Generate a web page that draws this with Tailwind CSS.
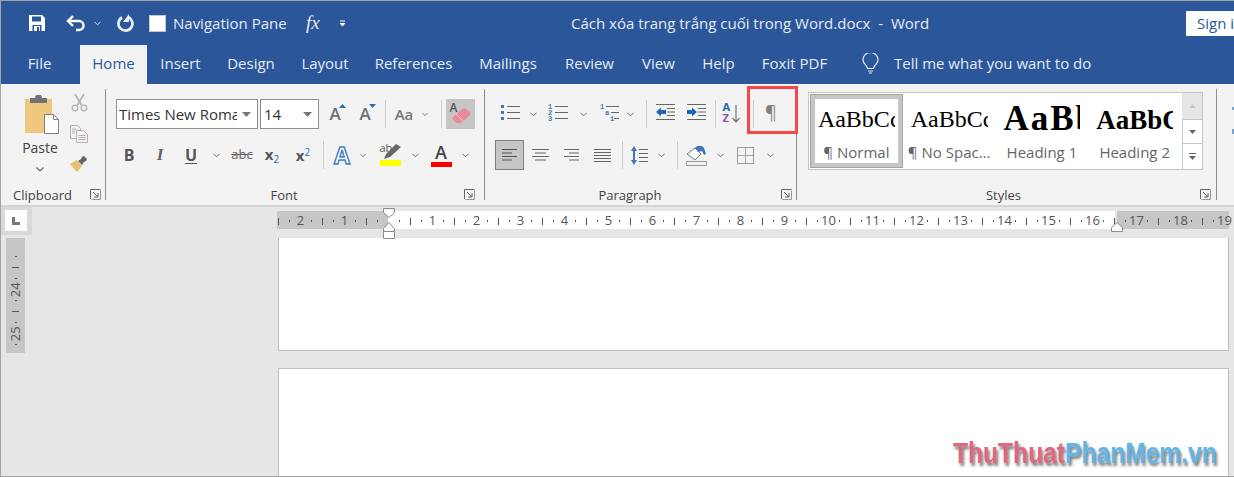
<!DOCTYPE html>
<html lang="vi">
<head>
<meta charset="UTF-8">
<title>Cách xóa trang trắng cuối trong Word.docx - Word</title>
<script src="https://cdn.jsdelivr.net/npm/@tailwindcss/browser@4"></script>
</head>
<body class="m-0 overflow-hidden bg-[#e6e6e6]">

<!-- shared small icons -->
<svg class="hidden">
  <symbol id="chev" viewBox="0 0 8 5"><path d="M.5 .5 4 4 7.500 .5" fill="none" stroke="#666" stroke-width="1.100"/></symbol>
  <symbol id="launcher" viewBox="0 0 11 11"><path d="M.5 10V.5H10.500M3 3l5 5M4 8h4V4" fill="none" stroke="#666" stroke-width="1"/><path d="M1.500 10.500h9v-9" fill="none" stroke="#999"/></symbol>
</svg>

<div class="relative w-[1234px] h-[477px] box-border overflow-hidden border-l border-t border-b border-[#a3a3a3] flex flex-col font-['Open_Sans',sans-serif]">

  <!-- title bar -->
  <div class="h-[41px] pt-[3px] shrink-0 bg-[#2b579a] flex items-center text-white text-[15px]">
    <div class="ml-[28px] w-[16px] flex justify-center">
      <svg width="16" height="16" viewBox="0 0 16 16"><path fill="#fff" d="M0 0h13l3 3v13H0z"/><path fill="#2b579a" d="M3 1.500h9v5H3zM3.500 10h9v6h-9z"/><path fill="#fff" d="M5 11h6v5H5z"/><path fill="#2b579a" d="M8 12h2v4H8z"/></svg>
    </div>
    <div class="ml-[21px] w-[20px]">
      <svg width="20" height="18" viewBox="0 0 20 18"><path d="M7 2 2 7l5 5M2 7h11a4.500 4.500 0 0 1 0 9h-3" fill="none" stroke="#fff" stroke-width="2.400"/></svg>
    </div>
    <svg class="ml-[8px] w-[7px] h-[5px]" viewBox="0 0 8 5"><path d="M.5 .5 4 4 7.500 .5" fill="none" stroke="#dfe6f1" stroke-width="1.100"/></svg>
    <div class="ml-[16px] w-[18px]">
      <svg width="18" height="18" viewBox="0 0 18 18"><path d="M5 3.500a7 7 0 1 0 6.500-.2" fill="none" stroke="#e9eef6" stroke-width="2.700"/><path d="M12 0v8H6z" fill="#e9eef6"/></svg>
    </div>
    <div class="ml-[14px] w-[17px] h-[17px] bg-white border border-[#c8c8c8]"></div>
    <span class="ml-[7px] w-[114px] whitespace-nowrap text-[#e6ebf4]">Navigation Pane</span>
    <span class="ml-[19px] w-[20px] text-[19px] italic font-['Liberation_Serif',serif] text-[#e6ebf4]">fx</span>
    <svg class="ml-[13px] w-[7px] h-[7px]" viewBox="0 0 7 7"><path d="M1 1h5" stroke="#fff" fill="none"/><path d="M.5 3h6L3.500 6.500z" fill="#fff"/></svg>
    <span class="ml-[225px] whitespace-pre text-[#e6ebf4]">Cách xóa trang trắng cuối trong Word.docx  -  Word</span>
    <div class="ml-auto w-[48px] h-[25px] bg-white text-[#2b579a] text-[15px] pl-[11px] leading-[25px] overflow-hidden whitespace-nowrap rounded-l-[1px]">Sign in</div>
  </div>

  <!-- tabs -->
  <div class="h-[42px] shrink-0 bg-[#2b579a] flex items-end text-[15px] text-[#e6ebf4]">
    <div class="w-[79px] pr-[2px] pb-[2px] h-[39px] flex items-center justify-center">File</div>
    <div class="w-[67px] pb-[2px] h-[39px] bg-[#f3f3f3] text-[#2b579a] flex items-center justify-center">Home</div>
    <div class="w-[67px] pb-[2px] h-[39px] flex items-center justify-center">Insert</div>
    <div class="w-[74px] pb-[2px] h-[39px] flex items-center justify-center">Design</div>
    <div class="w-[74px] pb-[2px] h-[39px] flex items-center justify-center">Layout</div>
    <div class="w-[103px] pb-[2px] h-[39px] flex items-center justify-center">References</div>
    <div class="w-[86px] pb-[2px] h-[39px] flex items-center justify-center">Mailings</div>
    <div class="w-[77px] pb-[2px] h-[39px] flex items-center justify-center">Review</div>
    <div class="w-[61px] pb-[2px] h-[39px] flex items-center justify-center">View</div>
    <div class="w-[59px] pb-[2px] h-[39px] flex items-center justify-center">Help</div>
    <div class="w-[93px] pb-[2px] h-[39px] flex items-center justify-center">Foxit PDF</div>
    <div class="ml-[20px] w-[18px] pb-[3px] h-[39px] flex items-center justify-center">
      <svg width="17" height="21" viewBox="0 0 17 21"><path d="M5.500 15.500c0-3-4.500-4.500-4.500-8.500a7.500 7.500 0 0 1 15 0c0 4-4.500 5.500-4.500 8.500zM6 18h5M7 20h3" fill="none" stroke="#e6ebf4" stroke-width="1.200"/></svg>
    </div>
    <div class="ml-[15px] pb-[3px] h-[39px] flex items-center">Tell me what you want to do</div>
  </div>

  <!-- ribbon -->
  <div class="h-[121px] shrink-0 bg-[#f3f3f3] flex text-[#444] text-[13px]">

    <!-- clipboard -->
    <div class="w-[104px] flex flex-col">
      <div class="flex flex-1">
        <div class="w-[68px] pl-[10px] flex flex-col items-center pt-[11px]">
          <svg class="ml-[5px]" width="35" height="39" viewBox="0 0 35 39"><path fill="#edc87e" d="M0 4h27v34H0z"/><path fill="#737373" d="M5 3h5a3.500 3.500 0 0 1 7 0h5v5H5z"/><path fill="#fff" stroke="#808080" d="M19.500 19.500h9l5 5v14h-14z"/><path fill="none" stroke="#808080" d="M28.500 19.500v5h5"/></svg>
          <span class="text-[14px] leading-[20px] mt-[4px]">Paste</span>
          <svg class="mt-[9px] w-[8px] h-[5px]"><use href="#chev"/></svg>
        </div>
        <div class="w-[20px] flex flex-col items-center pt-[10px]">
          <svg width="17" height="18" viewBox="0 0 17 18"><path d="M4 0l6.500 11M13 0 6.500 11" stroke="#b3b3b3" stroke-width="1.700" fill="none"/><circle cx="4" cy="14" r="2.800" fill="none" stroke="#b3b3b3" stroke-width="1.300"/><circle cx="13" cy="14" r="2.800" fill="none" stroke="#b3b3b3" stroke-width="1.300"/></svg>
          <svg class="mt-[13px]" width="18" height="18" viewBox="0 0 18 18"><path d="M.5.500h7l3 3v10H.5z" fill="#f3f3f3" stroke="#b9aeb9"/><path d="M6.500 5.500h7l4 4v8h-11z" fill="#f3f3f3" stroke="#b9aeb9"/><path d="M8.500 10.500h7M8.500 12.500h7M8.500 14.500h7M2 4h4M2 6h3M2 8h3" stroke="#b9aeb9"/></svg>
          <svg class="mt-[13px]" width="18" height="16" viewBox="0 0 18 16"><path fill="#e9bd72" d="M0 8l7-4 5 6-5 6z"/><path fill="#666" d="M8 5l3-2 1-2 2-1 3 3-1 2-2 1-2 3z"/></svg>
        </div>
      </div>
      <div class="h-[20px] pt-[1px] flex items-center pl-[12px] relative">Clipboard
        <svg class="absolute left-[89px] top-[4px] w-[11px] h-[11px]"><use href="#launcher"/></svg>
      </div>
    </div>
    <div class="w-px my-[5px] bg-[#8e8e8e]"></div>

    <!-- font -->
    <div class="w-[378px] flex flex-col">
      <div class="flex-1 pt-[15px] flex flex-col gap-[11px]">
        <div class="flex h-[30px] items-center pl-[10px]">
          <div class="w-[142px] h-[30px] box-border bg-white border border-[#8f8f8f] flex items-center pl-[2px] pr-[6px]">
            <span class="w-[120px] overflow-hidden whitespace-nowrap text-[15px] text-[#333]">Times New Roman</span>
            <svg class="ml-[5px]" width="9" height="5" viewBox="0 0 9 5"><path d="M0 0h9L4.500 5z" fill="#777"/></svg>
          </div>
          <div class="ml-[2px] w-[59px] h-[30px] box-border bg-white border border-[#8f8f8f] flex items-center justify-between pl-[3px] pr-[6px] text-[15px] text-[#333]">14
            <svg width="9" height="5" viewBox="0 0 9 5"><path d="M0 0h9L4.500 5z" fill="#777"/></svg>
          </div>
          <div class="ml-[1px] w-[30px] flex justify-center relative text-[17px] font-semibold text-[#707070]">A
            <svg class="absolute right-[4px] top-[3px]" width="7" height="4" viewBox="0 0 7 4"><path d="M0 4 3.500 0 7 4z" fill="#2b6cb0"/></svg>
          </div>
          <div class="w-[30px] flex justify-center relative text-[17px] font-semibold text-[#707070]">A
            <svg class="absolute right-[4px] top-[3px]" width="7" height="4" viewBox="0 0 7 4"><path d="M0 0 3.500 4 7 0z" fill="#2b6cb0"/></svg>
          </div>
          <div class="ml-[5px] w-px h-[28px] bg-[#cfcfcf]"></div>
          <div class="w-[36px] text-center text-[15px] font-semibold text-[#777]">Aa</div>
          <svg class="w-[6px] h-[5px]"><use href="#chev"/></svg>
          <div class="ml-[13px] w-px h-[28px] bg-[#cfcfcf]"></div>
          <div class="ml-[4px] w-[29px] h-[30px] bg-[#c6c6c6] flex items-center justify-center">
            <span class="relative w-[24px] h-[24px] block">
              <span class="absolute left-[1px] top-[-3px] text-[12px] font-semibold text-[#555]">A</span>
              <svg class="absolute left-[3px] top-[6px]" width="20" height="16" viewBox="0 0 20 16"><path d="M0 10 10 1q2-1.500 4 0l4 3q1 2-.5 3.500L9 15H4z" fill="#e98b99"/><path d="M4 6l7 7" stroke="#f5d0d6" stroke-width="1"/></svg>
            </span>
          </div>
        </div>
        <div class="flex h-[30px] items-center pl-[8px] text-[#555]">
          <div class="w-[30px] text-center text-[16px] font-bold">B</div>
          <div class="w-[32px] text-center text-[17px] italic font-bold font-['Liberation_Serif',serif] text-[#666]">I</div>
          <div class="w-[30px] text-center text-[16px] font-bold underline underline-offset-2">U</div>
          <div class="w-[20px] flex justify-center"><svg class="w-[7px] h-[5px]"><use href="#chev"/></svg></div>
          <div class="w-[32px] text-center text-[13px] line-through text-[#666]">abc</div>
          <div class="w-[28px] text-center text-[15px] font-bold">x<span class="text-[10px] font-normal text-[#2b6cb0] align-[-3px]">2</span></div>
          <div class="w-[34px] text-center text-[15px] font-bold">x<span class="text-[10px] font-normal text-[#2b6cb0] align-[5px]">2</span></div>
          <div class="ml-[3px] w-px h-[28px] bg-[#cfcfcf]"></div>
          <div class="w-[36px] text-center text-[23px] leading-[28px] font-bold text-white [-webkit-text-stroke:1.400px_#3f7fc4]">A</div>
          <svg class="w-[6px] h-[5px]"><use href="#chev"/></svg>
          <div class="ml-[6px] w-[36px] flex justify-center">
            <span class="relative w-[21px] h-[22px] block">
              <span class="absolute left-0 top-[-4px] text-[11px] text-[#555]">ab</span>
              <svg class="absolute left-[4px] top-[0px]" width="17" height="15" viewBox="0 0 17 15"><path d="M0 15l2-5L12 0l5 3L6 13z" fill="#666"/></svg>
              <span class="absolute left-0 bottom-0 w-[21px] h-[6px] bg-[#ffff00]"></span>
            </span>
          </div>
          <div class="w-[14px] flex justify-center"><svg class="w-[7px] h-[5px]"><use href="#chev"/></svg></div>
          <div class="w-[38px] flex justify-center">
            <span class="relative w-[21px] h-[24px] block text-center">
              <span class="block text-[18px] leading-[19px] font-semibold text-[#444]">A</span>
              <span class="absolute left-0 bottom-0 w-[21px] h-[5px] bg-[#ff0000]"></span>
            </span>
          </div>
          <div class="w-[10px] flex justify-center"><svg class="w-[7px] h-[5px]"><use href="#chev"/></svg></div>
        </div>
      </div>
      <div class="h-[20px] pt-[1px] relative flex items-center justify-center pr-[22px]">Font
        <svg class="absolute left-[358px] top-[4px] w-[11px] h-[11px]"><use href="#launcher"/></svg>
      </div>
    </div>
    <div class="w-px my-[5px] bg-[#8e8e8e]"></div>

    <!-- paragraph -->
    <div class="w-[311px] flex flex-col">
      <div class="flex-1 pt-[15px] flex flex-col gap-[11px]">
        <div class="flex h-[30px] items-center pl-[12px]">
          <div class="w-[26px] flex justify-center -mt-[4px]">
            <svg width="19" height="16" viewBox="0 0 19 16"><path d="M0 1h3v3H0zM0 7h3v3H0zM0 13h3v3H0z" fill="#3f78b5"/><path d="M6 2.500h13M6 8.500h13M6 14.500h13" stroke="#666"/></svg>
          </div>
          <div class="w-[20px] flex justify-center"><svg class="w-[7px] h-[5px]"><use href="#chev"/></svg></div>
          <div class="w-[30px] flex justify-center -mt-[4px]">
            <svg width="20" height="17" viewBox="0 0 20 17" font-size="7" font-weight="700" fill="#3f78b5" font-family="Liberation Mono, monospace"><text x="0" y="5">1</text><text x="0" y="11">2</text><text x="0" y="17">3</text><path d="M7 2.500h13M7 8.500h13M7 14.500h13" stroke="#666"/></svg>
          </div>
          <div class="w-[20px] flex justify-center"><svg class="w-[7px] h-[5px]"><use href="#chev"/></svg></div>
          <div class="w-[32px] flex justify-center -mt-[4px]">
            <svg width="19" height="17" viewBox="0 0 19 17" font-size="7" font-weight="700" fill="#3f78b5" font-family="Liberation Mono, monospace"><text x="0" y="5">1</text><text x="5" y="11">a</text><text x="10" y="17">i</text><path d="M6 2.500h13M11 8.500h8M14 14.500h5" stroke="#666"/></svg>
          </div>
          <div class="w-[10px] flex justify-center"><svg class="w-[7px] h-[5px]"><use href="#chev"/></svg></div>
          <div class="ml-[11px] w-px h-[28px] bg-[#cfcfcf]"></div>
          <div class="w-[36px] flex justify-center -mt-[4px]">
            <svg width="19" height="16" viewBox="0 0 19 16"><path d="M0 .5h19M11 4.500h8M11 8h8M11 11.500h8M0 15.500h19" stroke="#666"/><path d="M0 8l5-4.500V6h5v4H5v2.500z" fill="#1f67b5"/></svg>
          </div>
          <div class="w-[26px] flex justify-center -mt-[4px]">
            <svg width="19" height="16" viewBox="0 0 19 16"><path d="M0 .5h19M11 4.500h8M11 8h8M11 11.500h8M0 15.500h19" stroke="#666"/><path d="M10 8 5 3.500V6H0v4h5v2.500z" fill="#1f67b5"/></svg>
          </div>
          <div class="ml-[6px] w-px h-[28px] bg-[#cfcfcf]"></div>
          <div class="w-[30px] flex justify-center -mt-[3px]">
            <span class="relative w-[17px] h-[20px] block">
              <span class="absolute left-0 top-[-3px] text-[11px] leading-[13px] font-bold text-[#1f67b5]">A</span>
              <span class="absolute left-0 top-[8px] text-[11px] leading-[13px] font-bold text-[#8a4fb0]">Z</span>
              <svg class="absolute right-0 top-[2px]" width="8" height="18" viewBox="0 0 8 18"><path d="M4 0v17M.5 13 4 17l3.500-4" fill="none" stroke="#777" stroke-width="1.200"/></svg>
            </span>
          </div>
          <div class="ml-[7px] w-px h-[28px] bg-[#cfcfcf]"></div>
          <div class="w-[34px] text-center text-[18px] text-[#808080] -mt-[4px]">¶</div>
        </div>
        <div class="flex h-[30px] items-center pl-[10px]">
          <div class="w-[29px] h-[30px] box-border bg-[#c6c6c6] border border-[#808080] flex items-center justify-center">
            <svg width="15" height="12" viewBox="0 0 15 12"><path d="M0 .5h15M0 4h10M0 7.500h15M0 11h10" stroke="#555"/></svg>
          </div>
          <div class="w-[32px] flex justify-center">
            <svg width="17" height="12" viewBox="0 0 17 12"><path d="M0 .5h17M3 4h11M0 7.500h17M3 11h11" stroke="#666"/></svg>
          </div>
          <div class="w-[30px] flex justify-center">
            <svg width="15" height="12" viewBox="0 0 15 12"><path d="M0 .5h15M5 4h10M0 7.500h15M5 11h10" stroke="#666"/></svg>
          </div>
          <div class="w-[32px] flex justify-center">
            <svg width="17" height="13" viewBox="0 0 17 13"><path d="M0 .5h17M0 3.500h17M0 6.500h17M0 9.500h17M0 12.500h17" stroke="#666"/></svg>
          </div>
          <div class="ml-[4px] w-px h-[28px] bg-[#cfcfcf]"></div>
          <div class="w-[32px] flex justify-center">
            <svg width="17" height="19" viewBox="0 0 17 19"><path d="M3 0 6 5H0zM3 19 0 14h6zM2 4h2v11H2z" fill="#3f78b5"/><path d="M8 3.500h9M8 7.500h9M8 11.500h9M8 15.500h9" stroke="#666"/></svg>
          </div>
          <div class="w-[12px] flex justify-center"><svg class="w-[7px] h-[5px]"><use href="#chev"/></svg></div>
          <div class="ml-[10px] w-px h-[28px] bg-[#cfcfcf]"></div>
          <div class="w-[36px] flex justify-center">
            <svg width="21" height="21" viewBox="0 0 21 21"><path d="M1 9 9 3l6 6-6 6z" fill="#fff" stroke="#777"/><path d="M9 3c2-3 7-3 9 0l2 6-2 1-2-4-4 1z" fill="#3f78b5"/><path d="M.5 16.500h20v4H.5z" fill="#f3f3f3" stroke="#999"/></svg>
          </div>
          <div class="w-[12px] flex justify-center"><svg class="w-[7px] h-[5px]"><use href="#chev"/></svg></div>
          <div class="w-[38px] flex justify-center">
            <svg width="17" height="17" viewBox="0 0 17 17"><path d="M8.500.500v16M.5 8.500h16" stroke="#a6a6a6"/><path d="M.5.500h16v16H.5z" fill="none" stroke="#444" stroke-dasharray="1 1"/></svg>
          </div>
          <div class="w-[12px] flex justify-center"><svg class="w-[7px] h-[5px]"><use href="#chev"/></svg></div>
        </div>
      </div>
      <div class="h-[20px] pt-[1px] relative flex items-center justify-center pr-[21px]">Paragraph
        <svg class="absolute left-[296px] top-[4px] w-[11px] h-[11px]"><use href="#launcher"/></svg>
      </div>
    </div>
    <div class="w-px my-[5px] bg-[#8e8e8e]"></div>

    <!-- styles -->
    <div class="w-[419px] flex flex-col">
      <div class="flex-1 pl-[11px] pt-[8px]">
        <div class="w-[395px] h-[78px] box-border bg-white border border-[#c6c6c6] flex">
          <div class="ml-[1px] mt-[1px] w-[93px] h-[74px] box-border border border-[#a6a6a6]">
            <div class="h-full box-border border-4 border-[#c6c6c6] flex flex-col items-center">
              <div class="w-[77px] h-[40px] flex items-center overflow-hidden whitespace-nowrap font-['Liberation_Serif',serif] text-[24px] text-black">AaBbCc</div>
              <div class="mt-[4px] text-[15px] text-[#666] leading-[18px] whitespace-nowrap">¶ Normal</div>
            </div>
          </div>
          <div class="mt-[1px] w-[93px] h-[74px] flex flex-col items-center pt-[5px]">
            <div class="w-[77px] h-[40px] flex items-center overflow-hidden whitespace-nowrap font-['Liberation_Serif',serif] text-[24px] text-black">AaBbCc</div>
            <div class="mt-[4px] text-[15px] text-[#666] leading-[18px] whitespace-nowrap">¶ No Spac...</div>
          </div>
          <div class="mt-[1px] w-[93px] h-[74px] flex flex-col items-center pt-[5px]">
            <div class="w-[77px] h-[40px] flex items-center overflow-hidden whitespace-nowrap font-['Liberation_Serif',serif] text-[35px] tracking-[2px] font-bold text-black">AaBb</div>
            <div class="mt-[4px] text-[15px] text-[#666] leading-[18px] whitespace-nowrap">Heading 1</div>
          </div>
          <div class="mt-[1px] w-[93px] h-[74px] flex flex-col items-center pt-[5px]">
            <div class="w-[77px] h-[40px] pt-[2px] flex items-center overflow-hidden whitespace-nowrap font-['Liberation_Serif',serif] text-[27px] font-bold text-black">AaBbCc</div>
            <div class="mt-[4px] text-[15px] text-[#666] leading-[18px] whitespace-nowrap">Heading 2</div>
          </div>
          <div class="w-[20px] ml-[1px] flex flex-col">
            <div class="h-[26px] bg-[#e6e6e6] flex items-center justify-center"><svg width="7" height="4" viewBox="0 0 7 4"><path d="M0 4 3.500 0 7 4z" fill="#c6c6c6"/></svg></div>
            <div class="h-[25px] border-y border-l border-[#c6c6c6] flex items-center justify-center"><svg width="7" height="4" viewBox="0 0 7 4"><path d="M0 0 3.500 4 7 0z" fill="#666"/></svg></div>
            <div class="flex-1 border-l border-[#c6c6c6] flex items-center justify-center"><svg width="7" height="7" viewBox="0 0 7 7"><path d="M0 .5h7" stroke="#666"/><path d="M0 3h7L3.500 7z" fill="#666"/></svg></div>
          </div>
        </div>
      </div>
      <div class="h-[20px] pt-[1px] relative flex items-center justify-center pr-[6px]">Styles
        <svg class="absolute left-[403px] top-[4px] w-[11px] h-[11px]"><use href="#launcher"/></svg>
      </div>
    </div>
    <div class="w-px my-[5px] bg-[#8e8e8e]"></div>

    <!-- next group, cut off by the window edge -->
    <div class="ml-[15px] pt-[23px] flex flex-col gap-[19px]">
      <div class="w-[2px] h-[3px] bg-[#7ba3d0]"></div>
      <div class="w-[2px] h-[5px] bg-[#7ba3d0]"></div>
    </div>
  </div>

  <!-- ruler + pages -->
  <div class="flex-1 min-h-0 border-t-2 border-[#d4d4d4] flex bg-[#e6e6e6] overflow-hidden">
    <div class="w-[276px] shrink-0">
      <div class="w-[31px] h-[28px] bg-[#d9d9d9] pl-[4px] pt-[3px]">
        <div class="w-[22px] h-[21px] bg-white flex items-center justify-center">
          <svg width="8" height="8" viewBox="0 0 8 8"><path d="M0 0h3v5h5v3H0z" fill="#777"/></svg>
        </div>
      </div>
      <div class="ml-[5px] mt-[3px] w-[19px] h-[115px] bg-[#c6c6c6] flex flex-col-reverse items-center text-[13px] text-[#555] pb-[3px]" id="vruler"></div>
    </div>
    <div class="w-[957px] shrink-0">
      <div class="relative mt-[4px] w-[952px] h-[18px] flex">
        <div class="w-[111px] bg-[#c6c6c6]"></div>
        <div class="w-[727px] bg-white"></div>
        <div class="ml-[2px] w-[112px] bg-[#c6c6c6]"></div>
        <div id="hruler" class="absolute left-[-4px] top-[1px] h-[18px] flex items-center text-[13px] text-[#555]"></div>
        <svg class="absolute left-[106px] top-[-3px]" width="12" height="31" viewBox="0 0 12 31"><path d="M.5.500h11v4l-5.500 5-5.500-5z" fill="#fff" stroke="#8a8a8a"/><path d="M6 14.500l5.500 6v3H.5v-3z" fill="#fff" stroke="#8a8a8a"/><path d="M.5 23.500h11v7H.5z" fill="#fff" stroke="#8a8a8a"/></svg>
        <svg class="absolute left-[834px] top-[11px]" width="12" height="10" viewBox="0 0 12 10"><path d="M6 .5l5.500 5v4H.5v-4z" fill="#fff" stroke="#8a8a8a"/></svg>
      </div>
      <div class="mt-[9px] ml-[1px] w-[951px] h-[113px] box-border bg-white border-x border-b border-[#bfbfbf]"></div>
      <div class="mt-[17px] ml-[1px] w-[951px] h-[200px] box-border bg-white border border-[#bfbfbf]"></div>
    </div>
  </div>

  <!-- highlight round the pilcrow button -->
  <div class="absolute left-[746px] top-[85px] w-[51px] h-[48px] box-border border-[3px] border-[#f44848]"></div>

  <!-- watermark -->
  <div class="absolute left-[952px] top-[434px] origin-left scale-x-[0.82] whitespace-nowrap font-['Liberation_Sans',sans-serif] font-bold text-[30px] leading-[36px] [text-shadow:2px_3px_3px_rgba(0,0,0,0.5)]"><span class="text-[#dd6880]">ThuThuat</span><span class="text-[#62b5e8]">PhanMem.vn</span></div>
</div>

<script>
  // thuoc ngang: moi o 11px, so o vi tri chia het cho 4
  const hruler = document.getElementById("hruler");
  for (let k = 0; k <= 86; k++) {
    const cell = document.createElement("div");
    cell.className = "w-[11px] shrink-0 flex justify-center";
    const off = k - 10;
    if (off === 0) {
      cell.innerHTML = "";
    } else if (off % 4 === 0) {
      cell.innerHTML = `<span class="whitespace-nowrap">${Math.abs(off) / 4}</span>`;
    } else if (off % 2 === 0) {
      cell.innerHTML = '<span class="w-px h-[7px] bg-[#555]"></span>';
    } else {
      cell.innerHTML = '<span class="w-px h-[2px] bg-[#555]"></span>';
    }
    hruler.appendChild(cell);
  }

  // thuoc doc
  const vruler = document.getElementById("vruler");
  ["dot", "25", "dot", "tick", "dot", "24", "dot", "tick", "dot"].forEach(item => {
    const cell = document.createElement("div");
    cell.className = "h-[11px] shrink-0 flex items-center justify-center";
    if (item === "dot") cell.innerHTML = '<span class="w-[2px] h-px bg-[#555]"></span>';
    else if (item === "tick") cell.innerHTML = '<span class="w-[7px] h-px bg-[#555]"></span>';
    else cell.innerHTML = `<span class="-rotate-90 whitespace-nowrap">${item}</span>`;
    vruler.appendChild(cell);
  });
</script>
</body>
</html>
